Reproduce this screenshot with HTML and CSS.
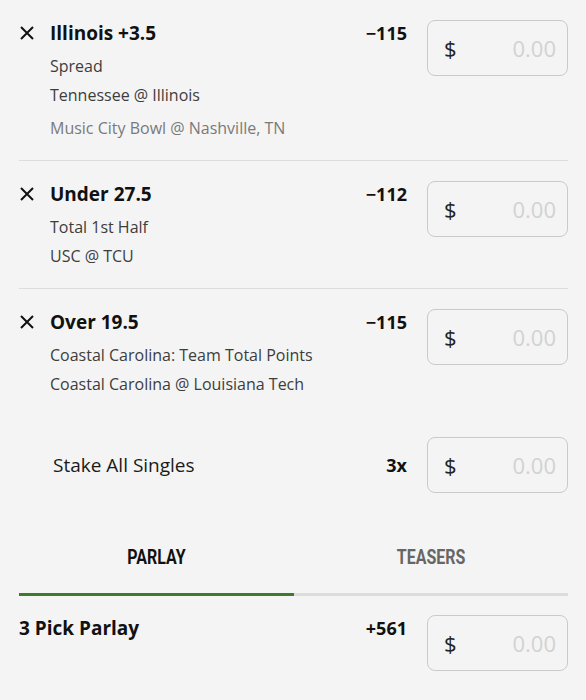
FILE: index.html
```html
<!DOCTYPE html>
<html lang="en">
<head>
    <meta charset="UTF-8">
    <meta name="viewport" content="width=device-width, initial-scale=1.0">
    <title>Bet Slip</title>
    <link rel="stylesheet" href="styles.css">
</head>
<body>
    <div class="slip">
        <div class="bet">
            <div class="bet-info">
                <span class="remove">
                    <svg width="14" height="14" viewBox="0 0 14 14"><path d="M1 1L13 13M13 1L1 13" stroke="#111" stroke-width="2" fill="none"/></svg>
                </span>
                <div class="bet-text">
                    <div class="bet-title">Illinois +3.5</div>
                    <div class="bet-sub">Spread</div>
                    <div class="bet-sub">Tennessee @ Illinois</div>
                    <div class="bet-meta">Music City Bowl @ Nashville, TN</div>
                </div>
            </div>
            <div class="odds">&minus;115</div>
            <div class="stake"><span class="dollar">$</span><span class="amount">0.00</span></div>
        </div>

        <div class="bet">
            <div class="bet-info">
                <span class="remove">
                    <svg width="14" height="14" viewBox="0 0 14 14"><path d="M1 1L13 13M13 1L1 13" stroke="#111" stroke-width="2" fill="none"/></svg>
                </span>
                <div class="bet-text">
                    <div class="bet-title">Under 27.5</div>
                    <div class="bet-sub">Total 1st Half</div>
                    <div class="bet-sub">USC @ TCU</div>
                </div>
            </div>
            <div class="odds">&minus;112</div>
            <div class="stake"><span class="dollar">$</span><span class="amount">0.00</span></div>
        </div>

        <div class="bet last">
            <div class="bet-info">
                <span class="remove">
                    <svg width="14" height="14" viewBox="0 0 14 14"><path d="M1 1L13 13M13 1L1 13" stroke="#111" stroke-width="2" fill="none"/></svg>
                </span>
                <div class="bet-text">
                    <div class="bet-title">Over 19.5</div>
                    <div class="bet-sub">Coastal Carolina: Team Total Points</div>
                    <div class="bet-sub">Coastal Carolina @ Louisiana Tech</div>
                </div>
            </div>
            <div class="odds">&minus;115</div>
            <div class="stake"><span class="dollar">$</span><span class="amount">0.00</span></div>
        </div>

        <div class="singles">
            <div class="singles-label">Stake All Singles</div>
            <div class="odds center">3x</div>
            <div class="stake"><span class="dollar">$</span><span class="amount">0.00</span></div>
        </div>

        <div class="tabs">
            <div class="tab active"><span>Parlay</span></div>
            <div class="tab"><span>Teasers</span></div>
        </div>

        <div class="bet parlay">
            <div class="bet-info">
                <div class="bet-title">3 Pick Parlay</div>
            </div>
            <div class="odds">+561</div>
            <div class="stake"><span class="dollar">$</span><span class="amount">0.00</span></div>
        </div>
    </div>
</body>
</html>
```

FILE: styles.css
```css
body {
    margin: 0;
    padding: 0;
    background-color: #f4f4f4;
    font-family: "Open Sans", "Liberation Sans", sans-serif;
    color: #111;
}
.slip {
    padding: 0 18px 0 19px;
}
.bet {
    display: flex;
    align-items: flex-start;
    padding: 20px 0 17px;
    border-bottom: 1px solid #dcdcdc;
}
.bet.last {
    border-bottom: none;
}
.bet-info {
    flex: 1;
    display: flex;
}
.remove {
    width: 31px;
    height: 26px;
    display: flex;
    align-items: center;
    padding-left: 1px;
    box-sizing: border-box;
}
.remove svg {
    display: block;
}
.bet-title {
    font-size: 19px;
    font-weight: 700;
    line-height: 26px;
    color: #111;
}
.bet-sub {
    font-size: 16px;
    line-height: 29px;
    color: #3d3d3d;
}
.bet-title + .bet-sub {
    margin-top: 6px;
}
.bet-meta {
    font-size: 16px;
    line-height: 29px;
    margin-top: 4px;
    color: #7a7a7a;
}
.odds {
    font-size: 18px;
    font-weight: 700;
    line-height: 26px;
    margin-right: 20px;
    text-align: right;
}
.odds.center {
    line-height: 56px;
}
.stake {
    width: 141px;
    height: 56px;
    box-sizing: border-box;
    border: 1px solid #cacaca;
    border-radius: 8px;
    display: flex;
    align-items: center;
    justify-content: space-between;
    padding: 0 11px 0 16px;
    font-size: 22px;
}
.dollar {
    color: #222;
}
.amount {
    color: #d2d2d2;
}
.singles {
    display: flex;
    align-items: center;
    padding-top: 21px;
}
.singles-label {
    flex: 1;
    padding-left: 34px;
    font-size: 19px;
    color: #1a1a1a;
}
.tabs {
    display: flex;
    margin-top: 52px;
}
.tab {
    flex: 1;
    text-align: center;
    font-family: Roboto, "Liberation Sans", sans-serif;
    font-weight: 700;
    font-size: 21px;
    line-height: 24px;
    text-transform: uppercase;
    color: #666;
    padding-bottom: 24px;
    border-bottom: 3px solid #dcdcdc;
}
.tab span {
    display: inline-block;
    transform: scaleX(0.76);
}
.tab.active {
    color: #111;
    border-bottom-color: #3d7a2c;
}
.bet.parlay {
    padding-top: 19px;
    border-bottom: none;
}
```
